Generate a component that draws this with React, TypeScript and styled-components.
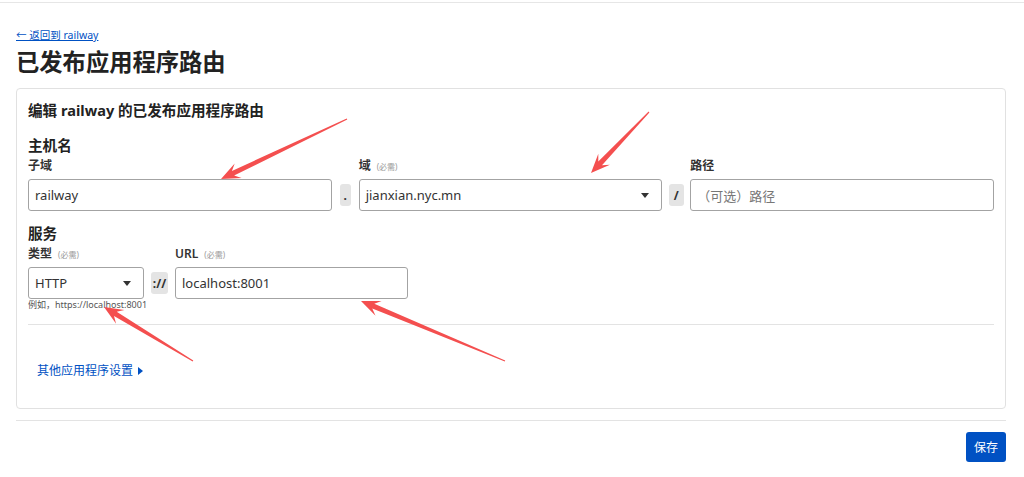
import React from 'react'
import styled, { createGlobalStyle } from 'styled-components'

const GlobalStyle = createGlobalStyle`
  html, body {
    margin: 0;
    padding: 0;
    background: #fff;
  }
  body {
    font-family: "Noto Sans", "Noto Sans CJK SC", sans-serif;
    color: #313131;
  }
  * {
    box-sizing: border-box;
  }
`

const Page = styled.div`
  position: relative;
  width: 1024px;
  height: 477px;
  margin-top: 2px;
  border-top: 1px solid #e6e6e6;
  padding: 25px 18px 0 16px;
`

const BackLink = styled.a`
  display: block;
  font-size: 10.5px;
  line-height: 14px;
  color: #0051c3;
  text-decoration: underline;
`

const Title = styled.h1`
  margin: 4px 0 10px;
  font-size: 23.3px;
  line-height: 32px;
  font-weight: 700;
  color: #222;
`

const Card = styled.section`
  border: 1px solid #e1e1e1;
  border-radius: 4px;
  padding: 11px 11px 29px;
`

const CardTitle = styled.h2`
  margin: 0;
  font-size: 14.6px;
  line-height: 20px;
  font-weight: 700;
  color: #222;
`

const SectionTitle = styled.h3<{ $top: number }>`
  margin: ${({ $top }) => $top}px 0 3px;
  font-size: 14.6px;
  line-height: 20px;
  font-weight: 700;
  color: #222;
`

const HostGrid = styled.div`
  display: grid;
  grid-template-columns: 1fr 27px 1fr 28px 1fr;
  grid-template-rows: 16px 32px;
  row-gap: 5px;
`

const ServiceGrid = styled.div`
  display: grid;
  grid-template-columns: 116px 31px 233px;
  grid-template-rows: 16px 32px 12px;
  row-gap: 5px;
  margin-top: 1px;
`

const Label = styled.label<{ $col: number }>`
  grid-column: ${({ $col }) => $col};
  grid-row: 1;
  font-size: 12px;
  line-height: 16px;
  font-weight: 600;
  color: #333;
  white-space: nowrap;
`

const Required = styled.span`
  margin-left: 6px;
  font-size: 8px;
  font-weight: 400;
  color: #999;
`

const Field = styled.div<{ $col: number }>`
  grid-column: ${({ $col }) => $col};
  grid-row: 2;
  display: flex;
  align-items: center;
  justify-content: space-between;
  height: 32px;
  border: 1px solid #a3a3a3;
  border-radius: 3px;
  padding: 0 12px 0 6px;
  font-size: 13px;
  color: #333;
  background: #fff;
`

const Placeholder = styled.span`
  color: #777;
`

const Caret = styled.span`
  width: 0;
  height: 0;
  border-left: 4px solid transparent;
  border-right: 4px solid transparent;
  border-top: 5px solid #333;
`

const ChipCell = styled.div<{ $col: number }>`
  grid-column: ${({ $col }) => $col};
  grid-row: 2;
  display: flex;
  align-items: center;
  justify-content: center;
`

const Chip = styled.span<{ $w: number }>`
  display: flex;
  align-items: center;
  justify-content: center;
  width: ${({ $w }) => $w}px;
  height: 22px;
  border-radius: 3px;
  background: #e4e4e4;
  font-size: 12px;
  font-weight: 700;
  color: #333;
`

const Hint = styled.div`
  grid-column: 1 / span 2;
  grid-row: 3;
  margin-top: -5px;
  font-size: 9px;
  line-height: 12px;
  color: #555;
  white-space: nowrap;
`

const Divider = styled.hr<{ $top: number; $bottom: number }>`
  margin: ${({ $top }) => $top}px 0 ${({ $bottom }) => $bottom}px;
  border: 0;
  border-top: 1px solid #e3e3e3;
`

const MoreLink = styled.a`
  display: flex;
  width: fit-content;
  align-items: center;
  gap: 5px;
  margin-left: 9px;
  font-size: 12px;
  line-height: 16px;
  color: #0051c3;
`

const Tri = styled.span`
  width: 0;
  height: 0;
  border-top: 4px solid transparent;
  border-bottom: 4px solid transparent;
  border-left: 5px solid #0051c3;
`

const Footer = styled.div`
  display: flex;
  justify-content: flex-end;
`

const SaveButton = styled.button`
  width: 40px;
  height: 30px;
  border: 0;
  border-radius: 3px;
  background: #0051c3;
  color: #fff;
  font-family: inherit;
  font-size: 12px;
  padding: 0;
`

const Overlay = styled.svg`
  position: absolute;
  left: 0;
  top: -3px;
  pointer-events: none;
`

type Pt = [number, number]

function arrow(tail: Pt, tip: Pt) {
  const dx = tip[0] - tail[0]
  const dy = tip[1] - tail[1]
  const len = Math.hypot(dx, dy)
  const ux = dx / len
  const uy = dy / len
  const nx = -uy
  const ny = ux
  const h = 19
  const at = (d: number, w: number): string =>
    `${(tip[0] - ux * d + nx * w).toFixed(1)},${(tip[1] - uy * d + ny * w).toFixed(1)}`
  return [
    at(len, 0.6),
    at(h * 0.7, 2.6),
    at(h, 8),
    at(0, 0),
    at(h, -8),
    at(h * 0.7, -2.6),
    at(len, -0.6)
  ].join(' ')
}

const ARROWS: [Pt, Pt][] = [
  [[347, 119], [221, 179]],
  [[649, 112], [591, 173]],
  [[193, 361], [104, 307]],
  [[505, 361], [361, 301]]
]

export default function App() {
  return (
    <>
      <GlobalStyle />
      <Page>
        <BackLink>← 返回到 railway</BackLink>
        <Title>已发布应用程序路由</Title>
        <Card>
          <CardTitle>编辑 railway 的已发布应用程序路由</CardTitle>

          <SectionTitle $top={15}>主机名</SectionTitle>
          <HostGrid>
            <Label $col={1}>子域</Label>
            <Field $col={1}>railway</Field>
            <ChipCell $col={2}><Chip $w={11}>.</Chip></ChipCell>
            <Label $col={3}>域<Required>(必需)</Required></Label>
            <Field $col={3}>jianxian.nyc.mn<Caret /></Field>
            <ChipCell $col={4}><Chip $w={15}>/</Chip></ChipCell>
            <Label $col={5}>路径</Label>
            <Field $col={5}><Placeholder>（可选）路径</Placeholder></Field>
          </HostGrid>

          <SectionTitle $top={12}>服务</SectionTitle>
          <ServiceGrid>
            <Label $col={1}>类型<Required>(必需)</Required></Label>
            <Field $col={1}>HTTP<Caret /></Field>
            <ChipCell $col={2}><Chip $w={17}>://</Chip></ChipCell>
            <Label $col={3}>URL<Required>(必需)</Required></Label>
            <Field $col={3}>localhost:8001</Field>
            <Hint>例如，https://localhost:8001</Hint>
          </ServiceGrid>

          <Divider $top={8} $bottom={38} />
          <MoreLink>其他应用程序设置<Tri /></MoreLink>
        </Card>
        <Divider $top={11} $bottom={11} />
        <Footer>
          <SaveButton>保存</SaveButton>
        </Footer>
        <Overlay width={1024} height={477} viewBox="0 0 1024 477">
          {ARROWS.map(([tail, tip], i) => (
            <polygon key={i} points={arrow(tail, tip)} fill="#f44f4f" />
          ))}
        </Overlay>
      </Page>
    </>
  )
}
